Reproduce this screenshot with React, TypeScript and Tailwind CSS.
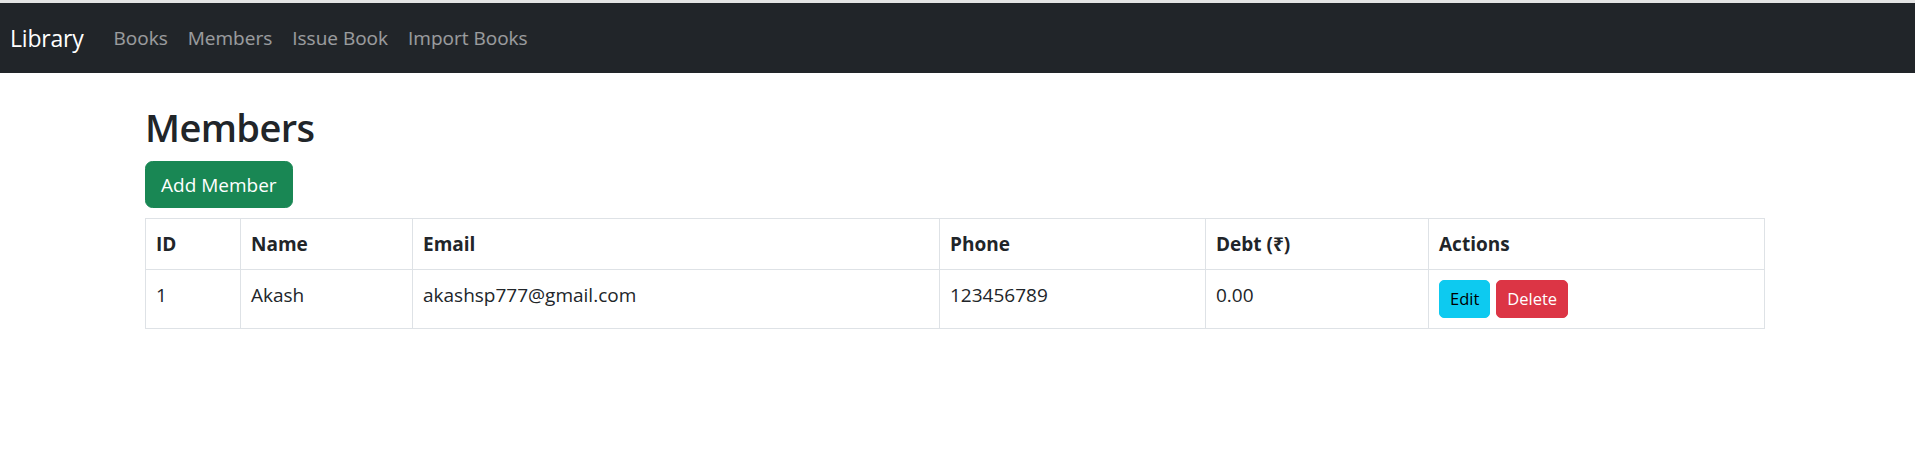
const members = [
  { id: 1, name: 'Akash', email: 'akashsp777@gmail.com', phone: '123456789', debt: '0.00' },
];

const navLinks = ['Books', 'Members', 'Issue Book', 'Import Books'];
const headers = ['ID', 'Name', 'Email', 'Phone', 'Debt (₹)', 'Actions'];

export default function App() {
  return (
    <div className="min-h-screen bg-white font-['Open_Sans','Noto_Sans',sans-serif] text-[19px] leading-[30px] text-[#212529]">
      <div className="h-[3px] bg-[#e4e4e4]" />
      <nav className="flex h-[70px] items-center bg-[#212529] px-[10px]">
        <a className="mr-[20px] py-[6px] text-[23px] leading-[37px] tracking-[-0.2px] text-white">Library</a>
        <ul className="flex">
          {navLinks.map((l) => (
            <li key={l}>
              <a className="block px-[10px] py-[10px] text-[19px] leading-[30px] text-white/55">{l}</a>
            </li>
          ))}
        </ul>
      </nav>

      <main className="ml-[145px] mt-[30px] w-[1620px]">
        <h2 className="mb-[10px] text-[38px] font-semibold leading-[48px] tracking-[-0.6px]">Members</h2>
        <button className="mb-[10px] rounded-[7.5px] border border-[#198754] bg-[#198754] px-[15px] py-[7.5px] text-[19px] leading-[30px] text-white">
          Add Member
        </button>
        <table className="w-full table-fixed border-collapse border border-[#dee2e6]">
          <colgroup>
            <col className="w-[95px]" />
            <col className="w-[172px]" />
            <col className="w-[527px]" />
            <col className="w-[266px]" />
            <col className="w-[223px]" />
            <col />
          </colgroup>
          <thead>
            <tr className="border-b border-[#dee2e6] text-left align-top">
              {headers.map((h) => (
                <th key={h} className="border-x border-[#dee2e6] p-[10px] font-bold">
                  {h}
                </th>
              ))}
            </tr>
          </thead>
          <tbody>
            {members.map((m) => (
              <tr key={m.id} className="align-top">
                <td className="border-x border-[#dee2e6] p-[10px]">{m.id}</td>
                <td className="border-x border-[#dee2e6] p-[10px]">{m.name}</td>
                <td className="border-x border-[#dee2e6] p-[10px]">{m.email}</td>
                <td className="border-x border-[#dee2e6] p-[10px]">{m.phone}</td>
                <td className="border-x border-[#dee2e6] p-[10px]">{m.debt}</td>
                <td className="border-x border-[#dee2e6] p-[10px]">
                  <div className="flex gap-[6px]">
                    <button className="rounded-[5px] border border-[#0dcaf0] bg-[#0dcaf0] px-[10px] py-[5px] text-[16.5px] leading-[26px] text-black">
                      Edit
                    </button>
                    <button className="rounded-[5px] border border-[#dc3545] bg-[#dc3545] px-[10px] py-[5px] text-[16.5px] leading-[26px] text-white">
                      Delete
                    </button>
                  </div>
                </td>
              </tr>
            ))}
          </tbody>
        </table>
      </main>
    </div>
  );
}
